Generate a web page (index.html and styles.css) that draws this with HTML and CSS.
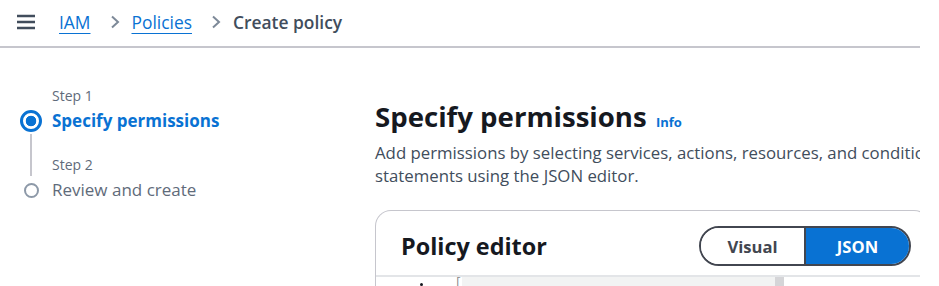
FILE: index.html
```html
<!DOCTYPE html>
<html lang="en">
<head>
<meta charset="utf-8">
<title>Create policy</title>
<link rel="stylesheet" href="styles.css">
</head>
<body>
<div class="viewport">
  <header class="topbar">
    <svg class="menu" width="20" height="16" viewBox="0 0 20 16"><path d="M1 2h18M1 8h18M1 14h18" stroke="#414d5c" stroke-width="2.4" fill="none"/></svg>
    <nav class="crumbs">
      <a class="crumb-link" href="#">IAM</a>
      <svg class="chev" width="10" height="14" viewBox="0 0 10 14"><path d="M2 1.5l6 5.5-6 5.5" stroke="#7d8998" stroke-width="2" fill="none"/></svg>
      <a class="crumb-link" href="#">Policies</a>
      <svg class="chev" width="10" height="14" viewBox="0 0 10 14"><path d="M2 1.5l6 5.5-6 5.5" stroke="#7d8998" stroke-width="2" fill="none"/></svg>
      <span class="crumb-current">Create policy</span>
    </nav>
  </header>
  <div class="layout">
    <aside class="steps">
      <div class="step-num r1">Step 1</div>
      <span class="dot active r2"></span>
      <div class="step-title active r2">Specify permissions</div>
      <span class="line"></span>
      <div class="step-num r4">Step 2</div>
      <span class="dot r5"></span>
      <div class="step-title r5">Review and create</div>
    </aside>
    <main class="content">
      <h1 class="title">Specify permissions <a class="info" href="#">Info</a></h1>
      <p class="desc">Add permissions by selecting services, actions, resources, and conditions. Build permission statements using the JSON editor.</p>
      <section class="card">
        <div class="card-head">
          <h2 class="card-title">Policy editor</h2>
          <div class="toggle">
            <button class="seg">Visual</button>
            <button class="seg on">JSON</button>
          </div>
        </div>
        <div class="editor">
          <div class="gutter"><span class="gdot"></span></div>
          <div class="code"><span class="bracket">[</span><span class="hl"></span><span class="hl-end"></span></div>
        </div>
      </section>
    </main>
  </div>
</div>
</body>
</html>
```

FILE: styles.css
```css
* { box-sizing: border-box; }
html, body { margin: 0; padding: 0; background: #fff; }
body { font-family: "Open Sans", "Noto Sans", sans-serif; color: #16191f; }
.viewport { width: 920px; height: 286px; overflow: hidden; }

.topbar {
  height: 48px;
  border-bottom: 2px solid #c6c6cd;
  display: flex;
  align-items: center;
  padding: 0 0 2px 16px;
}
.menu { margin-right: 23px; }
.crumbs { display: flex; align-items: center; font-size: 17.4px; }
.crumb-link {
  color: #0972d3;
  text-decoration: underline;
  text-underline-offset: 4px;
  text-decoration-thickness: 1px;
}
.chev { margin: 0 12px 0 19px; }
.crumb-current { color: #414d5c; font-weight: 600; }

.layout { display: flex; }
.steps {
  width: 375px;
  padding: 39px 0 0 20px;
  display: grid;
  grid-template-columns: 22px auto;
  grid-template-rows: 22px 24px 23px 22px 24px;
  column-gap: 10px;
  align-content: start;
}
.r1 { grid-column: 2; grid-row: 1; align-self: start; }
.r2 { grid-row: 2; }
.r4 { grid-column: 2; grid-row: 4; align-self: start; }
.r5 { grid-row: 5; }
.dot {
  grid-column: 1;
  align-self: center; justify-self: center;
  width: 15px; height: 15px; border-radius: 50%;
  border: 2px solid #8d99a8; background: #fff;
}
.dot.active {
  width: 22px; height: 22px; border: 3px solid #0972d3;
  background: radial-gradient(circle, #0972d3 0 5px, #fff 5.6px);
}
.line {
  grid-column: 1; grid-row: 3 / 5;
  justify-self: center;
  width: 2px; background: #c6c6cd;
  margin-top: 1px; margin-bottom: 2px;
}
.step-num { font-size: 14px; color: #5f6b7a; line-height: 18px; }
.step-title { grid-column: 2; font-size: 17px; color: #5f6b7a; line-height: 24px; }
.step-title.active { color: #0972d3; font-weight: 700; }

.content { flex: 1; padding-top: 50px; min-width: 0; }
.title { margin: 0; font-size: 27.6px; line-height: 36px; font-weight: 700; color: #16191f; }
.info { font-size: 13px; color: #0972d3; text-decoration: none; font-weight: 700; margin-left: 2px; }
.desc { margin: 1px 0 0; font-size: 16.8px; line-height: 23px; color: #414d5c; width: 720px; }

.card {
  margin-top: 23px;
  width: 555px;
  border: 1px solid #c6c6cd;
  border-bottom: 0;
  border-radius: 16px 16px 0 0;
}
.card-head {
  display: flex; align-items: center; justify-content: space-between;
  padding: 15px 18px 9px 25px;
}
.card-title { margin: 0; font-size: 23.4px; line-height: 30px; font-weight: 700; color: #16191f; }
.toggle {
  display: flex; width: 212px; height: 40px;
  border: 2px solid #424650; border-radius: 20px; overflow: hidden;
}
.seg {
  flex: 1; border: 0; background: #fff; color: #424650;
  font: 700 16.6px "Open Sans", "Noto Sans", sans-serif; padding: 0;
}
.seg.on { background: #0972d3; color: #fff; border-left: 2px solid #424650; }
.editor { display: flex; border-top: 2px solid #e3e5e8; height: 20px; }
.gutter { width: 77px; display: flex; justify-content: flex-end; padding: 6px 30px 0 0; }
.gdot { width: 3px; height: 3px; border-radius: 50%; background: #16191f; }
.code { flex: 1; display: flex; align-items: flex-start; }
.bracket { font: 11px/10px "Liberation Mono", monospace; color: #888; margin-left: 2px; }
.hl { width: 313px; height: 12px; background: #f2f3f3; margin-left: 0; }
.hl-end { width: 9px; height: 12px; background: #d5d5d8; }
```
